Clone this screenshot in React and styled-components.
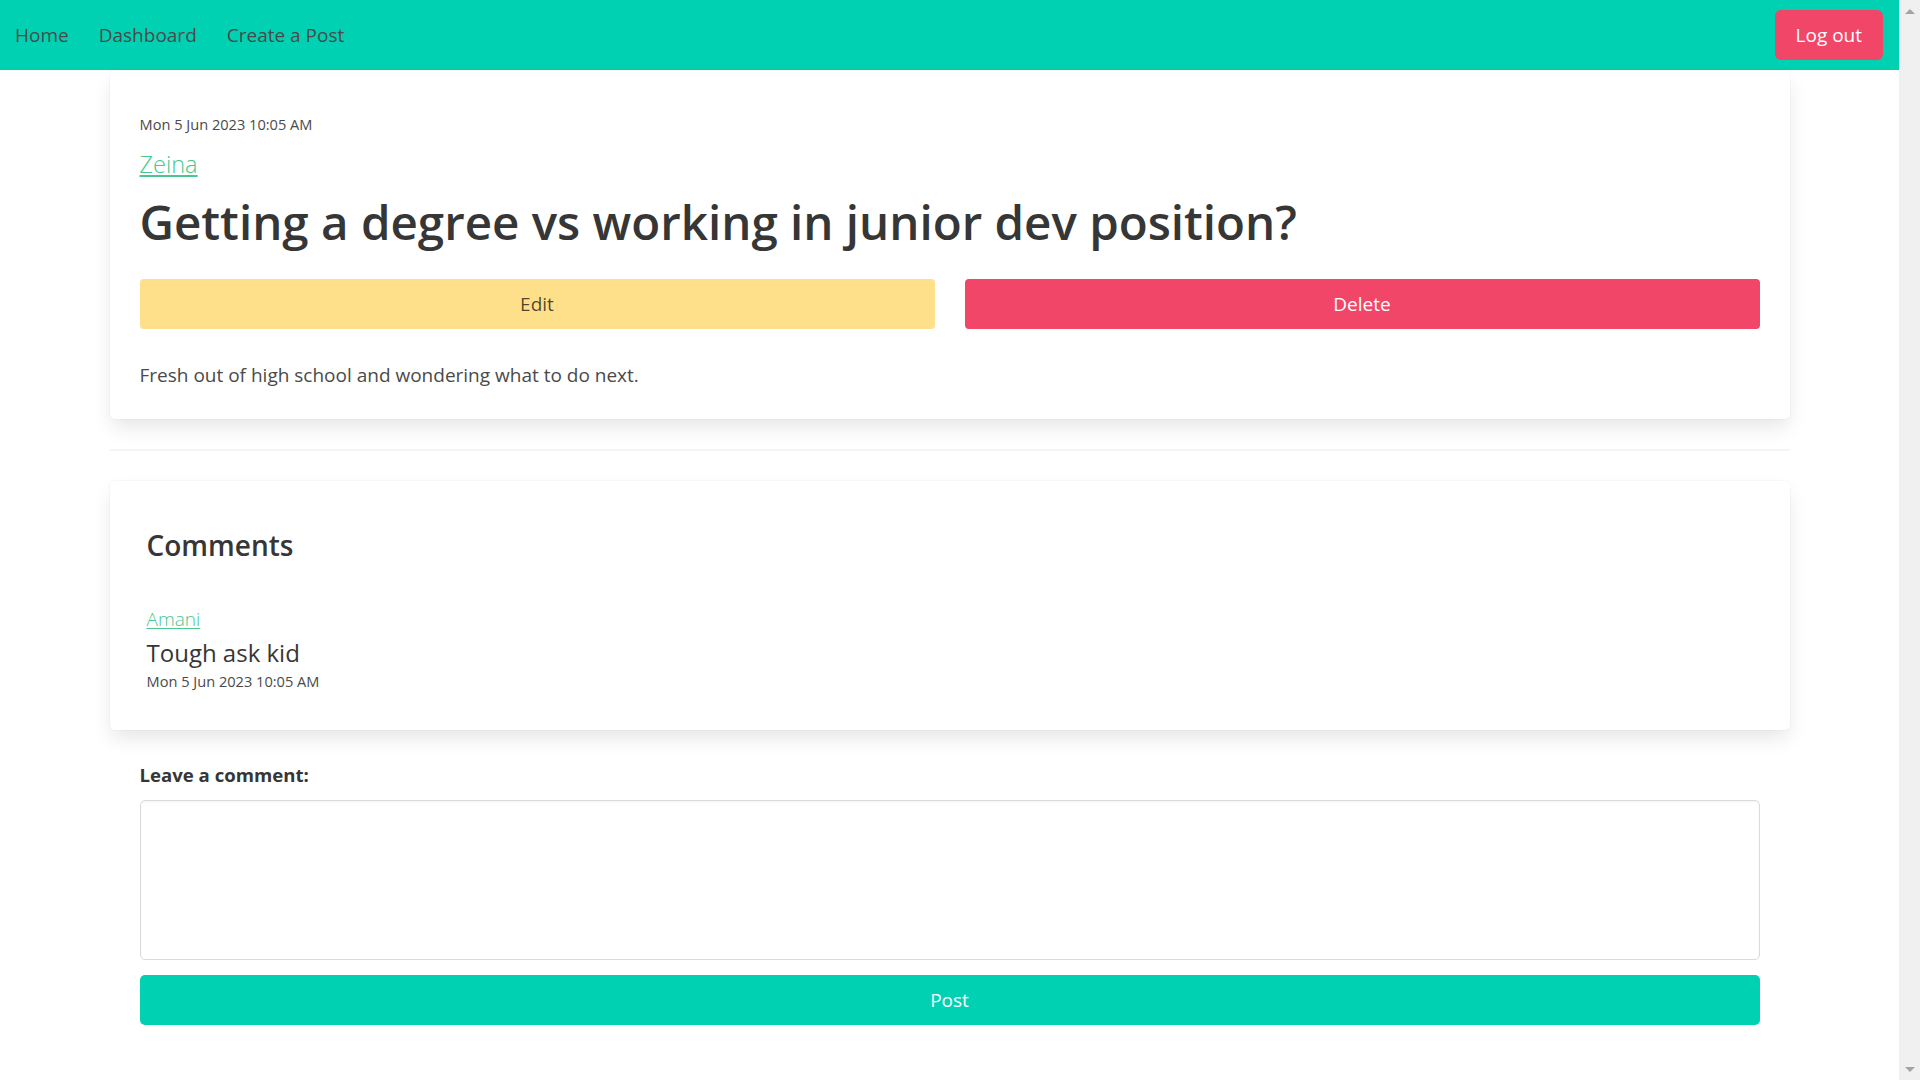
import React from 'react';
import styled, { createGlobalStyle } from 'styled-components';

const GlobalStyle = createGlobalStyle`
  html, body {
    height: 100%;
  }

  body {
    margin: 0;
    background: #ffffff;
    font-family: "Open Sans", "Noto Sans", Arial, sans-serif;
    color: #4a4a4a;
    overflow: hidden;
  }

  #root {
    height: 100%;
  }
`;

const Shell = styled.div`
  display: flex;
  height: 100%;
`;

const Viewport = styled.div`
  flex: 1;
  min-width: 0;
  overflow: hidden;
`;

// stand-in for the always-on scrollbar of the original page
const ScrollTrack = styled.div`
  width: 21px;
  flex-shrink: 0;
  display: flex;
  flex-direction: column;
  justify-content: space-between;
  align-items: center;
  background: #f0f0f0;
`;

const ScrollArrow = styled.div`
  width: 0;
  height: 0;
  margin: ${(p) => (p.$down ? '0 0 8px' : '9px 0 0')};
  border-left: 5px solid transparent;
  border-right: 5px solid transparent;
  border-bottom: ${(p) => (p.$down ? 'none' : '5px solid #a3a3a3')};
  border-top: ${(p) => (p.$down ? '5px solid #a3a3a3' : 'none')};
`;

const Navbar = styled.nav`
  display: flex;
  align-items: center;
  justify-content: space-between;
  height: 70px;
  background: #00d1b2;
`;

const NavGroup = styled.div`
  display: flex;
  align-items: center;
  height: 100%;
`;

const NavLink = styled.a`
  display: flex;
  align-items: center;
  height: 100%;
  padding: 0 15px;
  font-size: 19px;
  line-height: 30px;
  color: #4a4a4a;
  text-decoration: none;
  cursor: pointer;
`;

const NavItem = styled.div`
  display: flex;
  align-items: center;
  padding: 0 16px 0 15px;
`;

const LogoutButton = styled.button`
  height: 50px;
  padding: 0 21px;
  border: none;
  border-radius: 6px;
  background: #f14668;
  color: #ffffff;
  font-family: inherit;
  font-size: 19px;
  cursor: pointer;
`;

const Container = styled.main`
  max-width: 1680px;
  margin: 0 auto;
  padding-bottom: 40px;
`;

const Card = styled.section`
  background: #ffffff;
  border-radius: 5px;
  box-shadow: 0 10px 20px -2.5px rgba(10, 10, 10, 0.1), 0 0 0 1px rgba(10, 10, 10, 0.02);
  padding: ${(p) => p.$padding};
  display: flex;
  flex-direction: column;
`;

const DateText = styled.p`
  margin: ${(p) => p.$margin || '0'};
  font-size: 14.6px;
  line-height: 22px;
  color: #4a4a4a;
`;

const AuthorLink = styled.a`
  align-self: flex-start;
  margin: ${(p) => p.$margin || '0'};
  font-size: ${(p) => p.$size};
  font-weight: 300;
  line-height: 30px;
  color: #48c78e;
  text-decoration: underline;
  text-underline-offset: 2px;
  cursor: pointer;
`;

const PostTitle = styled.h1`
  margin: 11px 0 0;
  font-size: 47.5px;
  font-weight: 600;
  line-height: 64px;
  color: #363636;
`;

const ButtonRow = styled.div`
  display: grid;
  grid-template-columns: 1fr 1fr;
  gap: 30px;
  margin-top: 25px;
`;

const ActionButton = styled.button`
  height: 50px;
  border: none;
  border-radius: 4px;
  background: ${(p) => (p.$variant === 'danger' ? '#f14668' : '#ffe08a')};
  color: ${(p) => (p.$variant === 'danger' ? '#ffffff' : 'rgba(0, 0, 0, 0.7)')};
  font-family: inherit;
  font-size: 19px;
  cursor: pointer;
`;

const PostBody = styled.p`
  margin: 31px 0 0;
  font-size: 19px;
  line-height: 30px;
  color: #4a4a4a;
`;

const Divider = styled.hr`
  margin: 30px 0;
  height: 2px;
  border: none;
  background: #f5f5f5;
`;

const SectionTitle = styled.h2`
  margin: 0;
  font-size: 28px;
  font-weight: 600;
  line-height: 36px;
  color: #363636;
`;

const CommentText = styled.p`
  margin: 4px 0 0;
  font-size: 24px;
  line-height: 30px;
  color: #363636;
`;

const CommentForm = styled.form`
  display: flex;
  flex-direction: column;
  padding: 30px 30px 0;
`;

const Label = styled.label`
  font-size: 18.6px;
  font-weight: 700;
  line-height: 30px;
  color: #363636;
`;

const TextArea = styled.textarea`
  box-sizing: border-box;
  height: 160px;
  margin-top: 10px;
  padding: 12px 14px;
  border: 1px solid #dbdbdb;
  border-radius: 5px;
  box-shadow: inset 0 1px 2px rgba(10, 10, 10, 0.05);
  font-family: inherit;
  font-size: 20px;
  resize: none;
  outline: none;
`;

const SubmitButton = styled.button`
  height: 50px;
  margin-top: 15px;
  border: none;
  border-radius: 5px;
  background: #00d1b2;
  color: #ffffff;
  font-family: inherit;
  font-size: 19px;
  cursor: pointer;
`;

const App = () => {
  return (
    <>
      <GlobalStyle />
      <Shell>
        <Viewport>
          <Navbar>
            <NavGroup>
              <NavLink>Home</NavLink>
              <NavLink>Dashboard</NavLink>
              <NavLink>Create a Post</NavLink>
            </NavGroup>
            <NavGroup>
              <NavItem>
                <LogoutButton>Log out</LogoutButton>
              </NavItem>
            </NavGroup>
          </Navbar>

          <Container>
            <Card $padding="43px 30px 29px">
              <DateText>Mon 5 Jun 2023 10:05 AM</DateText>
              <AuthorLink $size="23.5px" $margin="14px 0 0">Zeina</AuthorLink>
              <PostTitle>Getting a degree vs working in junior dev position?</PostTitle>
              <ButtonRow>
                <ActionButton>Edit</ActionButton>
                <ActionButton $variant="danger">Delete</ActionButton>
              </ButtonRow>
              <PostBody>Fresh out of high school and wondering what to do next.</PostBody>
            </Card>

            <Divider />

            <Card $padding="46px 37px 38px">
              <SectionTitle>Comments</SectionTitle>
              <AuthorLink $size="19px" $margin="41px 0 0">Amani</AuthorLink>
              <CommentText>Tough ask kid</CommentText>
              <DateText $margin="2px 0 0">Mon 5 Jun 2023 10:05 AM</DateText>
            </Card>

            <CommentForm onSubmit={(e) => e.preventDefault()}>
              <Label htmlFor="comment">Leave a comment:</Label>
              <TextArea id="comment" />
              <SubmitButton type="submit">Post</SubmitButton>
            </CommentForm>
          </Container>
        </Viewport>
        <ScrollTrack>
          <ScrollArrow />
          <ScrollArrow $down />
        </ScrollTrack>
      </Shell>
    </>
  );
};

export default App;
